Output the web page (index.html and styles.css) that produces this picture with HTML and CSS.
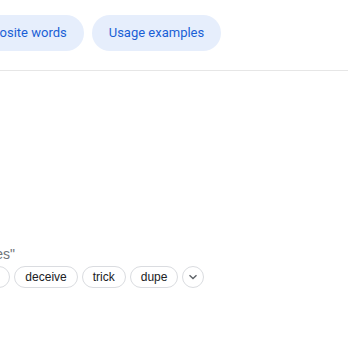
FILE: index.html
```html
<!DOCTYPE html>
<html lang="en">

<head>
    <meta charset="UTF-8">
    <meta name="viewport" content="width=device-width, initial-scale=1.0">
    <title>Dictionary</title>
    <link rel="stylesheet" href="styles.css">
</head>

<body>

    <div class="tabs">
        <div class="tab">Opposite words</div>
        <div class="tab">Usage examples</div>
    </div>
    <div class="divider"></div>

    <div class="similar">
        <div class="label"><span>Similar: "Fool around with lies"</span></div>
        <div class="chips">
            <div class="chip">fool</div>
            <div class="chip">deceive</div>
            <div class="chip">trick</div>
            <div class="chip">dupe</div>
            <div class="chip more">
                <svg width="12" height="12" viewBox="0 0 12 12">
                    <path d="M2.5 4.3 L6 7.6 L9.5 4.3" fill="none" stroke="#5f6368" stroke-width="1.4"/>
                </svg>
            </div>
        </div>
    </div>

</body>

</html>
```

FILE: styles.css
```css
body {
    font-family: Roboto, Arial, sans-serif;
    margin: 0;
    padding: 0;
    background: #fff;
    overflow: hidden;
    width: 348px;
    height: 348px;
}

.tabs {
    display: flex;
    gap: 8px;
    padding-top: 15px;
    margin-left: -41px;
    white-space: nowrap;
}

.tab {
    height: 36px;
    line-height: 36px;
    padding: 0 17px;
    border-radius: 18px;
    background-color: #e6eefc;
    color: #1a5fd6;
    font-size: 13px;
}

.divider {
    height: 1px;
    background-color: #e6e6e6;
    margin-top: 19px;
}

.similar {
    margin-top: 174px;
}

/* right edge of the clipped label sits at x=15 */
.label {
    width: 15px;
    display: flex;
    justify-content: flex-end;
    font-family: Arial, sans-serif;
    font-size: 14px;
    color: #70757a;
    white-space: nowrap;
    line-height: 18px;
}

.chips {
    display: flex;
    gap: 4px;
    margin-top: 3px;
    margin-left: -31px;
}

.chip {
    height: 20px;
    line-height: 20px;
    padding: 0 10px;
    border: 1px solid #dadce0;
    border-radius: 12px;
    font-family: Arial, sans-serif;
    font-size: 12px;
    color: #202124;
    white-space: nowrap;
}

.chip.more {
    width: 20px;
    padding: 0;
    display: flex;
    align-items: center;
    justify-content: center;
}
```
